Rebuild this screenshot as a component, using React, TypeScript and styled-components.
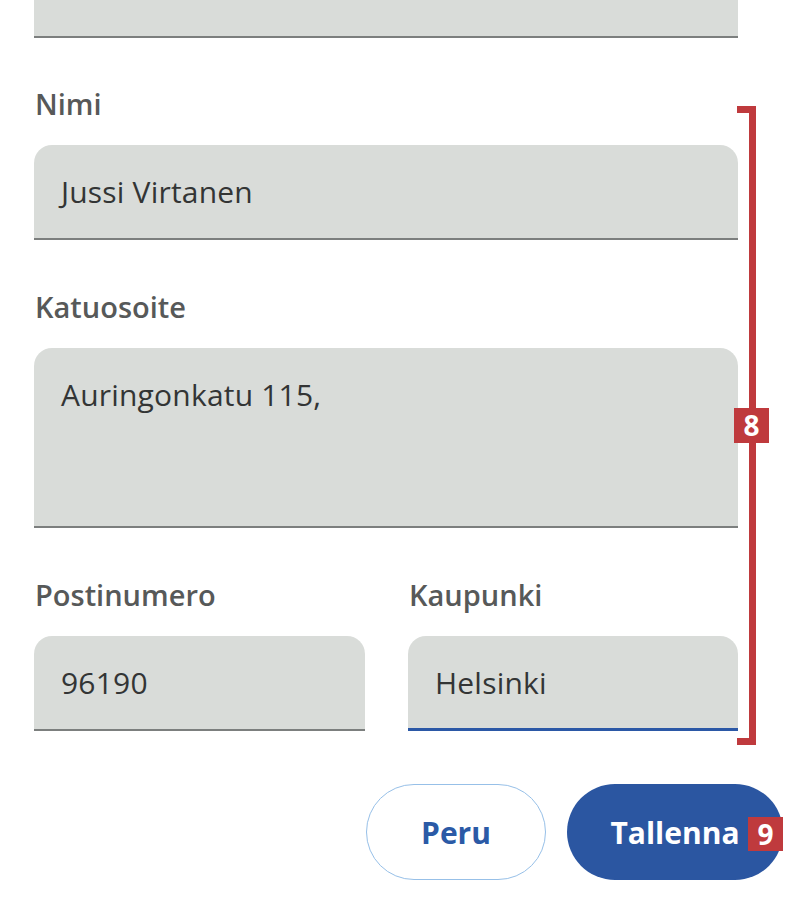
import React from "react";
import styled, { createGlobalStyle } from "styled-components";

const Global = createGlobalStyle`
  html, body { margin: 0; padding: 0; background: #ffffff; }
  body { font-family: "Open Sans", "Noto Sans", sans-serif; }
`;

const Page = styled.div`
  position: relative;
  width: 800px;
  height: 918px;
  overflow: hidden;
  box-sizing: border-box;
  padding-left: 34px;
`;

const Form = styled.div`
  width: 704px;
  display: flex;
  flex-direction: column;
`;

const Field = styled.div<{ $h: number; $focus?: boolean; $top?: boolean }>`
  box-sizing: border-box;
  height: ${(p) => p.$h}px;
  background: #d9dcd9;
  border-radius: ${(p) => (p.$top ? "0" : "18px 18px 0 0")};
  border-bottom: ${(p) => (p.$focus ? "3px solid #2b58a6" : "2px solid #7c7f7e")};
  padding: 27px 0 0 27px;
  font-size: 30px;
  line-height: 40px;
  letter-spacing: 0.2px;
  color: #333535;
`;

const Group = styled.div<{ $mt: number }>`
  display: flex;
  flex-direction: column;
  margin-top: ${(p) => p.$mt}px;
`;

const Label = styled.label`
  font-size: 29px;
  font-weight: 600;
  line-height: 34px;
  color: #575959;
  margin-bottom: 24px;
  padding-left: 1px;
`;

const Row = styled.div`
  display: grid;
  grid-template-columns: 331px 330px;
  column-gap: 43px;
`;

const Buttons = styled.div`
  display: flex;
  justify-content: flex-end;
  gap: 21px;
  margin-top: 53px;
  margin-right: -45px;
`;

const Button = styled.button<{ $primary?: boolean }>`
  position: relative;
  box-sizing: border-box;
  height: 96px;
  width: ${(p) => (p.$primary ? 216 : 180)}px;
  border-radius: 48px;
  font-family: "Open Sans", "Noto Sans", sans-serif;
  font-size: 30px;
  font-weight: 700;
  border: ${(p) => (p.$primary ? "none" : "1.5px solid #97c0e8")};
  background: ${(p) => (p.$primary ? "#2b56a1" : "#ffffff")};
  color: ${(p) => (p.$primary ? "#ffffff" : "#2b5aa6")};
  padding: 0;
`;

const Bracket = styled.div`
  position: absolute;
  left: 737px;
  top: 106px;
  width: 19px;
  height: 639px;
  box-sizing: border-box;
  border: 7px solid #bf3a3d;
  border-left: none;
`;

const Badge = styled.span`
  position: absolute;
  width: 35px;
  height: 35px;
  background: #bf3a3d;
  color: #ffffff;
  font-family: "Open Sans", "Noto Sans", sans-serif;
  font-size: 28px;
  font-weight: 700;
  line-height: 35px;
  text-align: center;
`;

const BracketBadge = styled(Badge)`
  left: 734px;
  top: 408px;
`;

const ButtonBadge = styled(Badge)`
  left: 181px;
  top: 33px;
  height: 34px;
  line-height: 34px;
`;

export default function App() {
  return (
    <>
      <Global />
      <Page>
        <Form>
          <Field $h={38} $top />
          <Group $mt={49}>
            <Label>Nimi</Label>
            <Field $h={95}>Jussi Virtanen</Field>
          </Group>
          <Group $mt={50}>
            <Label>Katuosoite</Label>
            <Field $h={180}>Auringonkatu 115,</Field>
          </Group>
          <Group $mt={50}>
            <Row>
              <Label>Postinumero</Label>
              <Label>Kaupunki</Label>
              <Field $h={95}>96190</Field>
              <Field $h={95} $focus>Helsinki</Field>
            </Row>
          </Group>
          <Buttons>
            <Button>Peru</Button>
            <Button $primary>
              Tallenna
              <ButtonBadge>9</ButtonBadge>
            </Button>
          </Buttons>
        </Form>
        <Bracket />
        <BracketBadge>8</BracketBadge>
      </Page>
    </>
  );
}
